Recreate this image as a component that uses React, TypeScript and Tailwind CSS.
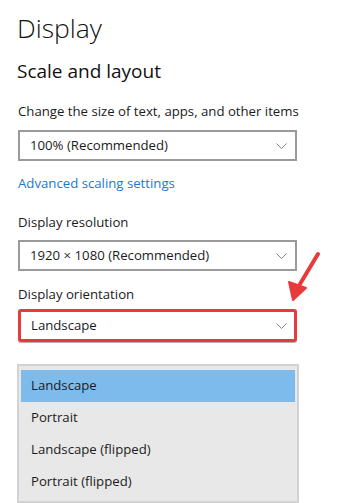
import { ReactNode } from 'react'

const font = { fontFamily: '"Open Sans", "Noto Sans", sans-serif' }

function Chevron() {
  return (
    <svg width="11" height="6" viewBox="0 0 11 6" className="shrink-0">
      <path d="M0.5 0.5 L5.5 5.5 L10.5 0.5" fill="none" stroke="#858585" strokeWidth="1" />
    </svg>
  )
}

function Select({ value }: { value: string }) {
  return (
    <div className="w-[279px] h-[31px] border-2 border-[#9a9a9a] bg-white flex items-center justify-between pl-[10px] pr-[8px]">
      <span className="text-[13.2px] text-[#1b1b1b]">{value}</span>
      <Chevron />
    </div>
  )
}

function Label({ children }: { children: ReactNode }) {
  return <p className="text-[13.2px] text-[#1b1b1b] leading-[20px]">{children}</p>
}

export default function App() {
  const options = ['Landscape', 'Portrait', 'Landscape (flipped)', 'Portrait (flipped)']

  return (
    <div className="relative w-[358px] h-[503px] bg-white overflow-hidden pl-[18px]" style={font}>
      <h1 className="text-[26.5px] font-light leading-[36px] pt-[10px] text-[#111] -ml-[1px]">Display</h1>
      <h2 className="text-[19px] leading-[26px] mt-[12px] text-[#111] -ml-[1px]">Scale and layout</h2>

      <div className="mt-[17px]">
        <Label>Change the size of text, apps, and other items</Label>
      </div>
      <div className="mt-[9px]">
        <Select value="100% (Recommended)" />
      </div>

      <p className="mt-[12px] text-[13.2px] leading-[20px] text-[#1a78cf]">Advanced scaling settings</p>

      <div className="mt-[19px]">
        <Label>Display resolution</Label>
      </div>
      <div className="mt-[8px]">
        <Select value="1920 × 1080 (Recommended)" />
      </div>

      <div className="mt-[13px]">
        <Label>Display orientation</Label>
      </div>
      <div className="mt-[5px] w-[279px] h-[33px] rounded-[3px] border-[3px] border-[#e53b3e] bg-white flex items-center justify-between pl-[10px] pr-[7px] shadow-[0_1px_0_#b5b5b5]">
        <span className="text-[13.2px] text-[#1b1b1b]">Landscape</span>
        <Chevron />
      </div>

      <div className="mt-[22px] -ml-[1px] w-[282px] h-[139px] bg-[#e8e8e8] border-2 border-[#d2d2d2] pt-[4px] px-[2px]">
        {options.map((o, i) => (
          <div
            key={o}
            className={`h-[32px] flex items-center pl-[10px] text-[13.2px] text-[#1b1b1b] ${i === 0 ? 'bg-[#7dbbec]' : ''}`}
          >
            {o}
          </div>
        ))}
      </div>

      <svg className="absolute left-[285px] top-[250px]" width="40" height="56" viewBox="0 0 40 56">
        <path d="M33 4 L15 34" stroke="#e8393b" strokeWidth="4" strokeLinecap="round" />
        <path d="M8 50 L4 32 L21 38 Z" fill="#e8393b" stroke="#e8393b" strokeWidth="2" strokeLinejoin="round" />
      </svg>
    </div>
  )
}
